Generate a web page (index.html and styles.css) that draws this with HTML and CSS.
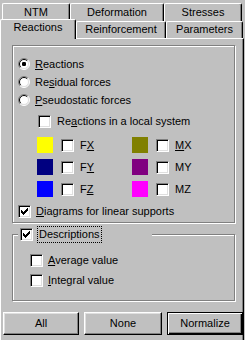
FILE: index.html
```html
<!DOCTYPE html>
<html>
<head>
<meta charset="utf-8">
<title>Reactions</title>
<link rel="stylesheet" href="styles.css">
</head>
<body>
<div class="dialog">
  <div class="tabrow back">
    <div class="tab t-ntm">NTM</div>
    <div class="tab t-def">Deformation</div>
    <div class="tab t-str">Stresses</div>
  </div>
  <div class="tabrow front">
    <div class="tab t-rea selected">Reactions</div>
    <div class="tab t-rei">Reinforcement</div>
    <div class="tab t-par">Parameters</div>
  </div>

  <div class="panel">
    <div class="group main">
      <div class="row radio-row">
        <svg class="radio" width="12" height="12" viewBox="0 0 12 12"><circle cx="6" cy="6" r="5" fill="#fff"/><path d="M2.1 9.9A5.5 5.5 0 0 1 9.9 2.1" fill="none" stroke="#808080"/><path d="M2.8 9.2A4.5 4.5 0 0 1 9.2 2.8" fill="none" stroke="#000"/><path d="M9.9 2.1A5.5 5.5 0 0 1 2.1 9.9" fill="none" stroke="#fff"/><path d="M9.2 2.8A4.5 4.5 0 0 1 2.8 9.2" fill="none" stroke="#dfdfdf"/><rect x="4" y="4" width="4" height="4" rx="1.2" fill="#000"/></svg>
        <span><u>R</u>eactions</span>
      </div>
      <div class="row radio-row">
        <svg class="radio" width="12" height="12" viewBox="0 0 12 12"><circle cx="6" cy="6" r="5" fill="#fff"/><path d="M2.1 9.9A5.5 5.5 0 0 1 9.9 2.1" fill="none" stroke="#808080"/><path d="M2.8 9.2A4.5 4.5 0 0 1 9.2 2.8" fill="none" stroke="#000"/><path d="M9.9 2.1A5.5 5.5 0 0 1 2.1 9.9" fill="none" stroke="#fff"/><path d="M9.2 2.8A4.5 4.5 0 0 1 2.8 9.2" fill="none" stroke="#dfdfdf"/></svg>
        <span>Re<u>s</u>idual forces</span>
      </div>
      <div class="row radio-row">
        <svg class="radio" width="12" height="12" viewBox="0 0 12 12"><circle cx="6" cy="6" r="5" fill="#fff"/><path d="M2.1 9.9A5.5 5.5 0 0 1 9.9 2.1" fill="none" stroke="#808080"/><path d="M2.8 9.2A4.5 4.5 0 0 1 9.2 2.8" fill="none" stroke="#000"/><path d="M9.9 2.1A5.5 5.5 0 0 1 2.1 9.9" fill="none" stroke="#fff"/><path d="M9.2 2.8A4.5 4.5 0 0 1 2.8 9.2" fill="none" stroke="#dfdfdf"/></svg>
        <span><u>P</u>seudostatic forces</span>
      </div>

      <div class="row local-row">
        <span class="chk"></span>
        <span>Re<u>a</u>ctions in a local system</span>
      </div>

      <div class="colors">
        <div class="cell"><span class="swatch" style="background:#ffff00"></span><span class="chk"></span><span>F<u>X</u></span></div>
        <div class="cell"><span class="swatch" style="background:#808000"></span><span class="chk"></span><span><u>M</u>X</span></div>
        <div class="cell"><span class="swatch" style="background:#000080"></span><span class="chk"></span><span>F<u>Y</u></span></div>
        <div class="cell"><span class="swatch" style="background:#800080"></span><span class="chk"></span><span>MY</span></div>
        <div class="cell"><span class="swatch" style="background:#0000ff"></span><span class="chk"></span><span>F<u>Z</u></span></div>
        <div class="cell"><span class="swatch" style="background:#ff00ff"></span><span class="chk"></span><span>MZ</span></div>
      </div>

      <div class="row diag-row">
        <span class="chk"><svg width="11" height="11" viewBox="1 1 11 11" shape-rendering="crispEdges"><path d="M9 3h1v1h-1zM8 4h2v1h-2zM3 5h1v1h-1zM7 5h3v1h-3zM3 6h2v1h-2zM6 6h3v1h-3zM3 7h5v1h-5zM4 8h3v1h-3zM5 9h1v1h-1z" fill="#000"/></svg></span>
        <span><u>D</u>iagrams for linear supports</span>
      </div>
    </div>

    <div class="group desc">
      <div class="group-title">
        <span class="chk"><svg width="11" height="11" viewBox="1 1 11 11" shape-rendering="crispEdges"><path d="M9 3h1v1h-1zM8 4h2v1h-2zM3 5h1v1h-1zM7 5h3v1h-3zM3 6h2v1h-2zM6 6h3v1h-3zM3 7h5v1h-5zM4 8h3v1h-3zM5 9h1v1h-1z" fill="#000"/></svg></span>
        <span class="focus">Descriptions</span>
      </div>
      <div class="row sub-row">
        <span class="chk"></span>
        <span><u>A</u>verage value</span>
      </div>
      <div class="row sub-row">
        <span class="chk"></span>
        <span><u>I</u>ntegral value</span>
      </div>
    </div>

    <div class="buttons">
      <div class="btn b-all">All</div>
      <div class="btn b-none">None</div>
      <div class="btn b-norm default">Normalize</div>
    </div>
  </div>
</div>
</body>
</html>
```

FILE: styles.css
```css
html, body {
   margin: 0;
   padding: 0;
   background-color: #c0c0c0;
   overflow: hidden;
}

body {
   font-family: "Liberation Sans", Arial, sans-serif;
   font-size: 11px;
   line-height: 13px;
   color: #000;
}

.dialog {
   width: 245px;
   height: 340px;
}

/* tabs */

.tabrow {
   display: flex;
   align-items: flex-start;
}

.tabrow.back {
   margin-top: 3px;
   margin-left: 2px;
   height: 18px;
}

.tabrow.front {
   height: 17px;
}

.tab {
   box-sizing: border-box;
   border-top: 1px solid #fff;
   border-left: 1px solid #fff;
   border-right: 1px solid #000;
   border-radius: 2px 2px 0 0;
   box-shadow: inset -1px 0 0 #808080;
   background-color: #c0c0c0;
   text-align: center;
   white-space: nowrap;
}

.back .tab {
   height: 18px;
   padding-top: 2px;
}

.front .tab {
   height: 17px;
   padding-top: 1px;
}

.t-ntm { width: 68px; }
.t-def { width: 94px; }
.t-str { width: 78px; }

.t-rea { width: 76px; }
.t-rei { width: 90px; }
.t-par { width: 77px; }

.front .tab.selected {
   position: relative;
   z-index: 1;
   height: 20px;
   margin-top: -2px;
   padding-top: 1px;
}

/* page */

.panel {
   box-sizing: border-box;
   width: 244px;
   height: 310px;
   border-top: 1px solid #fff;
   border-left: 1px solid #fff;
   border-right: 1px solid #000;
   box-shadow: inset -1px 0 0 #808080;
   padding-top: 6px;
}

.group {
   box-sizing: border-box;
   width: 223px;
   margin-left: 11px;
   border: 1px solid #808080;
   box-shadow: inset 1px 1px 0 #fff, 1px 1px 0 #fff;
}

.group.main {
   padding-top: 9px;
   padding-bottom: 1px;
}

.group.desc {
   margin-top: 11px;
   padding-bottom: 10px;
}

.row {
   display: flex;
   align-items: center;
   white-space: nowrap;
}

.radio-row {
   height: 18px;
   padding-left: 5px;
   gap: 5px;
}

.radio {
   flex: none;
}

.local-row {
   height: 19px;
   margin-top: 3px;
   padding-left: 25px;
   gap: 6px;
}

.diag-row {
   height: 19px;
   margin-top: 2px;
   padding-left: 5px;
   gap: 5px;
}

.sub-row {
   height: 20px;
   padding-left: 17px;
   gap: 5px;
}

/* check boxes */

.chk {
   flex: none;
   box-sizing: border-box;
   display: inline-block;
   width: 13px;
   height: 13px;
   background-color: #fff;
   border: 1px solid;
   border-color: #808080 #fff #fff #808080;
   box-shadow: inset 1px 1px 0 #000, inset -1px -1px 0 #dfdfdf;
}

.chk svg {
   display: block;
}

/* colour legend */

.colors {
   display: grid;
   grid-template-columns: 95px auto;
   margin-top: 3px;
   margin-left: 24px;
}

.cell {
   display: flex;
   align-items: center;
   height: 22px;
}

.swatch {
   flex: none;
   width: 16px;
   height: 16px;
   margin-right: 8px;
}

.cell .chk {
   margin-right: 6px;
}

/* descriptions */

.group-title {
   display: flex;
   align-items: center;
   width: 134px;
   height: 17px;
   margin-top: -9px;
   margin-left: 5px;
   background-color: #c0c0c0;
}

.group-title .chk {
   margin-left: 2px;
   margin-right: 4px;
}

.focus {
   border: 1px dotted #000;
   padding: 1px 1px 1px 1px;
   line-height: 13px;
}

.group-title + .sub-row {
   margin-top: 7px;
}

/* buttons */

.buttons {
   display: flex;
   gap: 5px;
   margin-top: 11px;
   margin-left: 2px;
}

.btn {
   box-sizing: border-box;
   height: 23px;
   line-height: 21px;
   text-align: center;
   border: 1px solid;
   border-color: #fff #000 #000 #fff;
   box-shadow: inset -1px -1px 0 #808080, inset 1px 1px 0 #dfdfdf;
}

.b-all { width: 76px; }
.b-none { width: 78px; }
.b-norm { width: 76px; }

.btn.default {
   border-color: #000;
   box-shadow: inset 1px 1px 0 #fff, inset -1px -1px 0 #000, inset -2px -2px 0 #808080;
}
```
